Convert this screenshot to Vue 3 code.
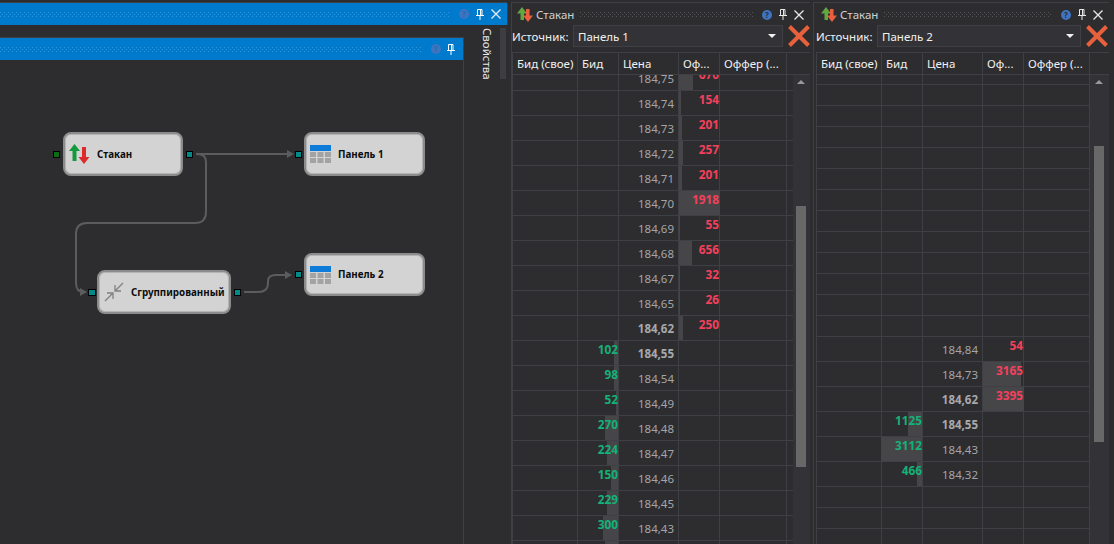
<script setup>
const cols = ['Бид (свое)', 'Бид', 'Цена', 'Оф...', 'Оффер (...', '']

const rows1 = [
  { price: '184,75', ask: '670', askBar: 14 },
  { price: '184,74', ask: '154', askBar: 2 },
  { price: '184,73', ask: '201', askBar: 3 },
  { price: '184,72', ask: '257', askBar: 4 },
  { price: '184,71', ask: '201', askBar: 3 },
  { price: '184,70', ask: '1918', askBar: 41 },
  { price: '184,69', ask: '55', askBar: 1 },
  { price: '184,68', ask: '656', askBar: 13 },
  { price: '184,67', ask: '32', askBar: 1 },
  { price: '184,65', ask: '26', askBar: 1 },
  { price: '184,62', ask: '250', askBar: 4, bold: true },
  { price: '184,55', bid: '102', bidBar: 4, bold: true },
  { price: '184,54', bid: '98', bidBar: 4 },
  { price: '184,49', bid: '52', bidBar: 2 },
  { price: '184,48', bid: '270', bidBar: 13 },
  { price: '184,47', bid: '224', bidBar: 11 },
  { price: '184,46', bid: '150', bidBar: 7 },
  { price: '184,45', bid: '229', bidBar: 11 },
  { price: '184,43', bid: '300', bidBar: 15 },
  { price: '', bid: '', bidBar: 13 }
]

const rows2 = [
  ...Array.from({ length: 13 }, () => ({ empty: true })),
  { price: '184,84', ask: '54', askBar: 0 },
  { price: '184,73', ask: '3165', askBar: 38 },
  { price: '184,62', ask: '3395', askBar: 41, bold: true },
  { price: '184,55', bid: '1125', bidBar: 14, bold: true },
  { price: '184,43', bid: '3112', bidBar: 41 },
  { price: '184,32', bid: '466', bidBar: 5 },
  { empty: true },
  { empty: true },
  { empty: true }
]

const panels = [
  { name: 'Панель 1', rows: rows1, cls: 'p1' },
  { name: 'Панель 2', rows: rows2, cls: 'p2' }
]
</script>

<template>
  <div class="app">
    <section class="workspace">
      <div class="main-col">
        <div class="titlebar outer">
          <div class="grip"></div>
          <svg class="help" viewBox="0 0 10 10"><circle cx="5" cy="5" r="5" fill="#3f74c0" /><text x="5" y="7.8" text-anchor="middle" class="qm">?</text></svg>
          <svg class="pin" viewBox="0 0 8 11"><path d="M1.500 .5h4.500v6H1.500zM0 6.500h8M4 6.500V11M4.500 1v5.500" fill="none" stroke="#fff" /></svg>
          <svg class="close" viewBox="0 0 10 10"><path d="M.5 .5l9 9M9.500 .5l-9 9" stroke="#e8eef5" stroke-width="1.300" /></svg>
        </div>
        <div class="inner-row">
          <div class="designer">
            <div class="titlebar inner">
              <div class="grip"></div>
              <svg class="help" viewBox="0 0 10 10"><circle cx="5" cy="5" r="5" fill="#3f74c0" /><text x="5" y="7.8" text-anchor="middle" class="qm">?</text></svg>
              <svg class="pin" viewBox="0 0 8 11"><path d="M1.500 .5h4.500v6H1.500zM0 6.500h8M4 6.500V11M4.500 1v5.500" fill="none" stroke="#fff" /></svg>
            </div>
            <div class="canvas">
              <svg class="wires" viewBox="0 60 463 484">
                <g fill="none" stroke="#5c5c5e" stroke-width="2">
                  <path d="M196 154H288" />
                  <path d="M197 154q9 0 9 8V212q0 11-11 11H87q-11 0-11 11V283q0 9 8 9h2" />
                  <path d="M244 292h14q10 0 10-9v-2q0-6 8-6h10" />
                </g>
                <g fill="#5c5c5e">
                  <path d="M287 150l7 4-7 4z" />
                  <path d="M80 288l7 4-7 4z" />
                  <path d="M285 271l7 4-7 4z" />
                </g>
              </svg>

              <span class="port green pos-a"></span>
              <span class="port pos-b"></span>
              <span class="port pos-c"></span>
              <span class="port pos-d"></span>
              <span class="port pos-e"></span>
              <span class="port pos-f"></span>

              <div class="node n-stakan">
                <svg class="n-icon arrows" viewBox="0 0 21 20">
                  <path d="M5.500 0L11 7H7.500v10h-4V7H0z" fill="#149a3c" />
                  <path d="M15 20l-5.500-7H13V3h4v10h3.500z" fill="#dd2a2a" />
                </svg>
                <span>Стакан</span>
              </div>

              <div class="node n-p1">
                <svg class="n-icon grid" viewBox="0 0 21 18">
                  <rect width="21" height="6" fill="#0d7bd8" />
                  <path d="M0 7h6v5H0zM7.500 7h6v5h-6zM15 7h6v5h-6zM0 13h6v5H0zM7.500 13h6v5h-6zM15 13h6v5h-6z" fill="#a3a3a3" />
                </svg>
                <span>Панель 1</span>
              </div>

              <div class="node n-group">
                <svg class="n-icon shrink" viewBox="0 0 20 20">
                  <path d="M1 19l8-8M3 11h6v6M19 1l-8 8M11 3v6h6" fill="none" stroke="#808080" stroke-width="1.300" />
                </svg>
                <span>Сгруппированный</span>
              </div>

              <div class="node n-p2">
                <svg class="n-icon grid" viewBox="0 0 21 18">
                  <rect width="21" height="6" fill="#0d7bd8" />
                  <path d="M0 7h6v5H0zM7.500 7h6v5h-6zM15 7h6v5h-6zM0 13h6v5H0zM7.500 13h6v5h-6zM15 13h6v5h-6z" fill="#a3a3a3" />
                </svg>
                <span>Панель 2</span>
              </div>
            </div>
          </div>
          <aside class="side-tabs">
            <span class="vtab">Свойства</span>
            <span class="side-bar"></span>
          </aside>
        </div>
      </div>
    </section>

    <section v-for="p in panels" :key="p.name" class="book" :class="p.cls">
      <header class="book-title">
        <svg class="b-icon" viewBox="0 0 16 15">
          <path d="M5 0l5 6.500H7V13H3.500V6.500H0z" fill="#62a63f" />
          <path d="M11 15L6 8.500h3V2h3.500v6.500H16z" fill="#e8613c" />
        </svg>
        <span class="b-name">Стакан</span>
        <div class="grip dark"></div>
        <svg class="help" viewBox="0 0 10 10"><circle cx="5" cy="5" r="5" fill="#3f74c0" /><text x="5" y="7.800" text-anchor="middle" class="qm">?</text></svg>
        <svg class="pin" viewBox="0 0 8 11"><path d="M1.500 .5h4.500v6H1.500zM0 6.500h8M4 6.500V11M4.500 1v5.500" fill="none" stroke="#e8e8e8" /></svg>
        <svg class="close" viewBox="0 0 10 10"><path d="M.5 .5l9 9M9.500 .5l-9 9" stroke="#e8e8e8" stroke-width="1.300" /></svg>
      </header>
      <div class="source">
        <span class="src-label">Источник:</span>
        <div class="combo">
          <span>{{ p.name }}</span>
          <i class="caret"></i>
        </div>
        <svg class="clear" viewBox="0 0 22 22">
          <path d="M1.500 1.500l19 19M20.500 1.500l-19 19" stroke="#e8613c" stroke-width="4" />
        </svg>
      </div>
      <div class="table">
        <div class="t-main">
          <div class="t-head">
            <div v-for="(c, i) in cols" :key="i" class="th">{{ c }}</div>
          </div>
          <div class="t-body">
            <div class="t-rows">
              <div v-for="(r, i) in p.rows" :key="i" class="tr" :class="{ empty: r.empty }">
                <div class="td"></div>
                <div class="td bid">
                  <i v-if="r.bidBar" class="bar" :style="{ width: r.bidBar + 'px' }"></i>
                  <b v-if="r.bid">{{ r.bid }}</b>
                </div>
                <div class="td price" :class="{ bold: r.bold }">{{ r.price }}</div>
                <div class="td ask">
                  <i v-if="r.askBar" class="bar" :style="{ width: r.askBar + 'px' }"></i>
                  <b v-if="r.ask">{{ r.ask }}</b>
                </div>
                <div class="td"></div>
                <div class="td last"></div>
              </div>
            </div>
          </div>
        </div>
        <div class="scroll">
          <i class="up"></i>
          <i class="thumb"></i>
        </div>
      </div>
    </section>
  </div>
</template>

<style>
html, body { margin: 0; background: #2d2d30; }
</style>

<style scoped>
.app {
  width: 1114px;
  height: 544px;
  display: flex;
  overflow: hidden;
  background: #2d2d30;
  font-family: "Noto Sans", "Open Sans", sans-serif;
  color: #f1f1f1;
  font-size: 12px;
}
.workspace { width: 511px; flex: none; }
.main-col { padding-top: 3px; height: 541px; display: flex; flex-direction: column; }
.titlebar {
  height: 22px;
  background: #007acc;
  display: flex;
  align-items: center;
  flex: none;
}
.titlebar.outer { width: 507px; padding-right: 6px; box-sizing: border-box; box-shadow: 0 -1px #3f3f46, 1px 0 #3f3f46; }
.titlebar .grip { margin-right: 9px; }
.grip {
  flex: 1;
  height: 5px;
  background-image: radial-gradient(circle at .5px .5px, #2f93d8 .6px, transparent .7px), radial-gradient(circle at 2.500px 2.500px, #2f93d8 .6px, transparent .7px);
  background-size: 4px 4px;
}
.grip.dark {
  background-image: radial-gradient(circle at .5px .5px, #56565a .6px, transparent .7px), radial-gradient(circle at 2.500px 2.500px, #56565a .6px, transparent .7px);
  margin: 0 9px 0 6px;
}
.help { width: 10px; height: 10px; margin-right: 7px; flex: none; }
.qm { font-size: 8px; font-weight: 700; fill: #2d2d30; font-family: "Noto Sans", sans-serif; }
.titlebar .qm { fill: #1d6fb8; }
.pin { width: 8px; height: 11px; margin-right: 7px; flex: none; }
.close { width: 10px; height: 10px; flex: none; }
.inner-row { flex: 1; display: flex; min-height: 0; padding-top: 12px; }
.designer {
  width: 463px;
  flex: none;
  display: flex;
  flex-direction: column;
  border-right: 1px solid #3f3f46;
  border-top: 1px solid #3f3f46;
}
.titlebar.inner { padding-right: 8px; }
.titlebar.inner .grip { margin-right: 10px; }
.titlebar.inner .help { margin-right: 6px; }
.titlebar.inner .pin { margin-right: 0; }
.canvas { position: relative; flex: 1; }
.wires { position: absolute; left: 0; top: 0; width: 463px; height: 484px; }
.port {
  position: absolute;
  width: 5px;
  height: 5px;
  background: #008b8b;
  border: 1px solid #000;
}
.port.green { background: #0c6e12; }
.pos-a { left: 53px; top: 91px; }
.pos-b { left: 186px; top: 91px; }
.pos-c { left: 295px; top: 91px; }
.pos-d { left: 88px; top: 229px; width: 6px; }
.pos-e { left: 234px; top: 229px; }
.pos-f { left: 295px; top: 211px; }
.node {
  position: absolute;
  box-sizing: border-box;
  display: flex;
  align-items: center;
  background: #d3d3d3;
  border: 2px solid #8c8c8c;
  box-shadow: inset 0 0 0 1px #b4b4b4;
  border-radius: 8px;
  color: #0c0c0c;
  font-weight: 700;
  font-size: 9.800px;
  white-space: nowrap;
}
.n-stakan { left: 63px; top: 72px; width: 120px; height: 44px; padding-left: 4px; gap: 7px; }
.n-p1 { left: 304px; top: 72px; width: 121px; height: 44px; padding-left: 4px; gap: 7px; }
.n-p2 { left: 304px; top: 193px; width: 121px; height: 43px; padding-left: 4px; gap: 7px; }
.n-group { left: 97px; top: 210px; width: 134px; height: 44px; padding-left: 5px; gap: 7px; }
.n-icon.arrows { width: 21px; height: 20px; }
.n-icon.grid { width: 21px; height: 18px; }
.n-icon.shrink { width: 20px; height: 20px; }
.side-tabs { flex: 1; position: relative; display: flex; padding-left: 17px; gap: 7px; }
.vtab {
  writing-mode: vertical-rl;
  height: 52px;
  font-size: 11.500px;
  line-height: 13px;
  color: #e8e8e8;
  margin-top: -9px;
  white-space: nowrap;
}
.side-bar { position: absolute; left: 36px; top: -9px; width: 6px; height: 51px; background: #3e3e42; }

.book {
  width: 299px;
  height: 542px;
  margin-top: 2px;
  flex: none;
  display: flex;
  flex-direction: column;
  box-shadow: inset 1px 1px #3f3f46;
}
.book.p1 { margin-right: 3px; }
.book.p2 { width: 294px; padding-left: 2px; }
.book-title { height: 21px; margin-top: 2px; display: flex; align-items: center; padding: 0 6px 0 6px; flex: none; }
.b-icon { width: 16px; height: 15px; flex: none; margin-right: 3px; }
.b-name { font-size: 11.500px; color: #d0d0d0; }
.source { height: 22px; display: flex; align-items: center; padding-left: 1px; flex: none; }
.src-label { width: 61px; flex: none; font-size: 11.500px; color: #f1f1f1; }
.combo {
  width: 210px;
  height: 22px;
  box-sizing: border-box;
  border: 1px solid #3f3f46;
  background: #333337;
  display: flex;
  align-items: center;
  justify-content: space-between;
  padding: 0 6px 0 4px;
  font-size: 11.500px;
}
.p2 .combo { width: 204px; }
.caret { width: 0; height: 0; border: 4px solid transparent; border-top-color: #f1f1f1; border-bottom: 0; }
.clear { width: 22px; height: 22px; margin-left: 5px; flex: none; }
.table { flex: 1; display: flex; min-height: 0; margin-top: 5px; margin-left: 1px; border-top: 1px solid #3f3f46; border-left: 1px solid #3f3f46; }
.t-main { display: flex; flex-direction: column; min-height: 0; overflow: hidden; }
.t-head { display: flex; height: 21px; flex: none; border-bottom: 1px solid #3f3f46; }
.th, .td { box-sizing: border-box; border-right: 1px solid #3f3f46; flex: none; }
.th { height: 21px; line-height: 21px; padding-left: 4px; font-size: 11.500px; color: #f1f1f1; white-space: nowrap; overflow: hidden; }
.th:nth-child(1), .td:nth-child(1) { width: 65px; }
.th:nth-child(2), .td:nth-child(2) { width: 41px; }
.th:nth-child(3), .td:nth-child(3) { width: 60px; }
.th:nth-child(4), .td:nth-child(4) { width: 41px; }
.th:nth-child(5), .td:nth-child(5) { width: 67px; }
.th:nth-child(6), .td:nth-child(6) { width: 6px; border-right: 0; }
.p2 .th:nth-child(5), .p2 .td:nth-child(5) { width: 66px; }
.p2 .th:nth-child(6), .p2 .td:nth-child(6) { display: none; }
.t-body { flex: 1; overflow: hidden; }
.p1 .t-rows { margin-top: -9px; }
.tr { display: flex; height: 25px; box-sizing: border-box; border-bottom: 1px solid #3f3f46; }
.tr.empty { height: 21px; }
.p2 .t-rows { margin-top: -11px; }
.td { height: 100%; position: relative; }
.td b { position: absolute; right: 0; top: 0; font-size: 11.800px; line-height: 16px; font-weight: 700; }
.bid b { color: #14b278; }
.ask b { color: #f5405c; }
.bar { position: absolute; top: 0; bottom: 0; background: #464648; }
.bid .bar { right: 0; }
.ask .bar { left: 0; }
.price {
  text-align: right;
  padding: 4px 4px 0 0;
  font-size: 11.500px;
  line-height: 18px;
  color: #a5a5a8;
}
.price.bold { font-weight: 700; color: #a8a8ac; }
.scroll { flex: 1; position: relative; background: #333337; }
.scroll::before {
  content: "";
  display: block;
  height: 21px;
  background: #2d2d30;
  border-bottom: 1px solid #3f3f46;
}
.up { position: absolute; top: 27px; left: 4px; width: 0; height: 0; border: 4px solid transparent; border-bottom-color: #999; border-top: 0; }
.thumb { position: absolute; width: 10px; background: #686868; left: 3px; }
.p1 .thumb { top: 153px; height: 261px; }
.p2 .thumb { top: 93px; height: 296px; left: 4px; }
.p2 .up { left: 5px; }
</style>
